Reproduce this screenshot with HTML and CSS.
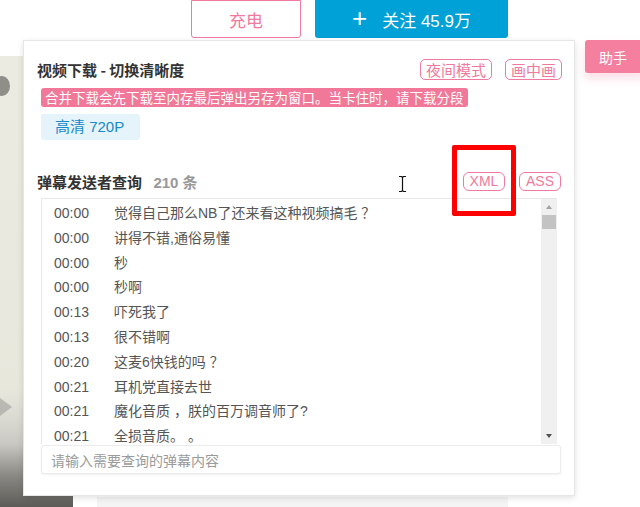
FILE: index.html
```html
<!DOCTYPE html>
<html lang="zh-CN">
<head>
    <meta charset="UTF-8">
    <meta name="viewport" content="width=device-width, initial-scale=1.0">
    <title>弹幕查询</title>
    <link rel="stylesheet" href="styles.css">
</head>
<body>
    <div class="page">
        <div class="video-bg">
            <div class="video-figure"></div>
            <div class="video-play"></div>
        </div>
        <div class="below-strip"></div>

        <div class="top-actions">
            <button class="btn-charge">充电</button>
            <button class="btn-follow"><span class="plus">+</span>关注 45.9万</button>
        </div>

        <button class="btn-helper">助手</button>

        <div class="panel">
            <div class="panel-row">
                <h3 class="panel-title">视频下载 - 切换清晰度</h3>
                <div class="tags">
                    <span class="tag">夜间模式</span>
                    <span class="tag">画中画</span>
                </div>
            </div>
            <div class="notice">合并下载会先下载至内存最后弹出另存为窗口。当卡住时，请下载分段</div>
            <div class="quality">高清 720P</div>

            <div class="panel-row section-row">
                <h3 class="panel-title">弹幕发送者查询 <span class="count">210 条</span></h3>
                <div class="tags tags-small">
                    <span class="tag tag-small">XML</span>
                    <span class="tag tag-small">ASS</span>
                </div>
            </div>

            <div class="danmaku-box">
                <ul class="danmaku-list">
                    <li><span class="time">00:00</span>觉得自己那么NB了还来看这种视频搞毛 ？</li>
                    <li><span class="time">00:00</span>讲得不错,通俗易懂</li>
                    <li><span class="time">00:00</span>秒</li>
                    <li><span class="time">00:00</span>秒啊</li>
                    <li><span class="time">00:13</span>吓死我了</li>
                    <li><span class="time">00:13</span>很不错啊</li>
                    <li><span class="time">00:20</span>这麦6快钱的吗 ？</li>
                    <li><span class="time">00:21</span>耳机党直接去世</li>
                    <li><span class="time">00:21</span>魔化音质 ，朕的百万调音师了?</li>
                    <li><span class="time">00:21</span>全损音质。 。</li>
                </ul>
                <div class="scrollbar">
                    <span class="arrow arrow-up"></span>
                    <span class="thumb"></span>
                    <span class="arrow arrow-down"></span>
                </div>
            </div>
            <input class="search" type="text" placeholder="请输入需要查询的弹幕内容">

            <svg class="ibeam" width="9" height="18" viewBox="0 0 9 18">
                <path d="M1 1.5h2.5l1 1 1-1H8M4.5 2.5v13M1 16.5h2.5l1-1 1 1H8" fill="none" stroke="#111" stroke-width="1.2"/>
            </svg>
            <div class="highlight"></div>
        </div>
    </div>
</body>
</html>
```

FILE: styles.css
```css
body {
    margin: 0;
    background-color: #ffffff;
    font-family: 'Liberation Sans', 'Noto Sans CJK SC', sans-serif;
    color: #333;
}

.page {
    position: relative;
    width: 640px;
    height: 507px;
    overflow: hidden;
}

/* video behind the popup */
.video-bg {
    position: absolute;
    left: 0;
    top: 56px;
    width: 73px;
    height: 451px;
    background: linear-gradient(to bottom, #ecebe2 0%, #e8e7dc 74%, #dcdbd3 80%, #c9c8c2 86%, #8a8984 93%, #5c5b57 100%);
}

.video-figure {
    position: absolute;
    left: -6px;
    top: 20px;
    width: 16px;
    height: 20px;
    border-radius: 50%;
    background-color: #8f8e88;
}

.video-play {
    position: absolute;
    left: 0;
    top: 342px;
    width: 0;
    height: 0;
    border-top: 9px solid transparent;
    border-bottom: 9px solid transparent;
    border-left: 12px solid #b9b8b2;
}

.below-strip {
    position: absolute;
    left: 97px;
    top: 497px;
    width: 411px;
    height: 10px;
    background-color: #f4f4f4;
}

.top-actions {
    display: flex;
    gap: 14px;
    padding-left: 191px;
}

.top-actions button {
    height: 38px;
    font-family: 'Liberation Sans', 'Noto Sans CJK SC', sans-serif;
    font-size: 17px;
    border-radius: 0 0 3px 3px;
    cursor: pointer;
}

.btn-charge {
    width: 110px;
    background-color: #fff;
    border: 1px solid #f07a9d;
    color: #f07a9d;
}

.btn-follow {
    width: 193px;
    background-color: #00a1d6;
    border: none;
    color: #fff;
    display: flex;
    align-items: center;
    justify-content: center;
}

.btn-follow .plus {
    font-size: 26px;
    font-weight: 300;
    margin-right: 15px;
    line-height: 1;
    margin-top: -2px;
}

.btn-helper {
    position: absolute;
    left: 585px;
    top: 40px;
    width: 60px;
    height: 33px;
    padding-left: 14px;
    text-align: left;
    background-color: #f57f9f;
    border: none;
    border-radius: 3px;
    color: #fff;
    font-family: 'Noto Sans CJK SC', sans-serif;
    font-size: 14px;
    box-shadow: 0 6px 10px rgba(245, 127, 159, 0.25);
}

/* popup */
.panel {
    position: absolute;
    left: 23px;
    top: 40px;
    width: 525px;
    height: 436px;
    padding: 18px 12px 0 13px;
    background-color: #fff;
    border: 1px solid #e6e6e6;
    box-shadow: 0 2px 6px rgba(0, 0, 0, 0.12);
    display: flex;
    flex-direction: column;
}

.panel-row {
    display: flex;
    align-items: center;
    justify-content: space-between;
    height: 21px;
}

.panel-title {
    margin: 0;
    font-family: 'Noto Sans CJK SC', sans-serif;
    font-size: 15px;
    font-weight: bold;
    color: #333;
    line-height: 21px;
}

.count {
    margin-left: 8px;
    color: #999;
    font-family: 'Liberation Sans', 'Noto Sans CJK SC', sans-serif;
}

.tags {
    display: flex;
    gap: 13px;
}

.tags-small {
    gap: 14px;
    margin-right: 1px;
}

.tag {
    display: inline-block;
    height: 19px;
    line-height: 19px;
    padding: 0 5px;
    border: 1px solid #f07a9d;
    border-radius: 5px;
    color: #f07a9d;
    font-family: 'Noto Sans CJK SC', sans-serif;
    font-size: 15px;
}

.tag-small {
    height: 17px;
    line-height: 17px;
    width: 30px;
    text-align: center;
    font-family: 'Liberation Sans', sans-serif;
    font-size: 14px;
    border-radius: 6px;
}

.notice {
    align-self: flex-start;
    margin: 8px 0 0 4px;
    height: 19px;
    line-height: 19px;
    padding: 0 4px;
    background-color: #f2789a;
    border-radius: 3px;
    color: #fff;
    font-family: 'Noto Sans CJK SC', sans-serif;
    font-size: 13.5px;
    white-space: nowrap;
}

.quality {
    align-self: flex-start;
    margin: 7px 0 0 4px;
    width: 99px;
    height: 26px;
    line-height: 26px;
    padding-left: 14px;
    box-sizing: border-box;
    background-color: #e5f3fb;
    border-radius: 3px;
    color: #1789c9;
    font-size: 15px;
}

.section-row {
    margin-top: 31px;
    height: 21px;
}

.danmaku-box {
    display: flex;
    margin: 6px 0 0 4px;
    width: 516px;
    height: 246px;
    box-sizing: border-box;
    border: 1px solid #e8e8e8;
    border-right: none;
    border-bottom: none;
}

.danmaku-list {
    flex: 1;
    margin: 0;
    padding: 2px 0 0 12px;
    list-style: none;
    overflow: hidden;
}

.danmaku-list li {
    height: 24.8px;
    line-height: 24.8px;
    font-size: 14px;
    color: #555;
    white-space: nowrap;
}

.danmaku-list .time {
    display: inline-block;
    width: 60px;
}

.scrollbar {
    position: relative;
    width: 16px;
    background-color: #f0f0f0;
}

.scrollbar .thumb {
    position: absolute;
    left: 1px;
    top: 16px;
    width: 14px;
    height: 14px;
    background-color: #c3c3c3;
}

.scrollbar .arrow {
    position: absolute;
    left: 5px;
    width: 0;
    height: 0;
    border-left: 3.5px solid transparent;
    border-right: 3.5px solid transparent;
}

.arrow-up {
    top: 6px;
    border-bottom: 4px solid #a3a3a3;
}

.arrow-down {
    bottom: 6px;
    border-top: 4px solid #505050;
}

.search {
    margin: 1px 0 0 4px;
    width: 520px;
    height: 29px;
    box-sizing: border-box;
    padding: 0 9px;
    border: 1px solid #ececec;
    border-radius: 3px;
    box-shadow: 0 1px 2px rgba(0, 0, 0, 0.06);
    font-family: 'Noto Sans CJK SC', sans-serif;
    font-size: 14px;
    outline: none;
}

.search::placeholder {
    color: #9a9a9a;
}

.ibeam {
    position: absolute;
    left: 374px;
    top: 134px;
}

/* red annotation box drawn over the screenshot */
.highlight {
    position: absolute;
    left: 428px;
    top: 104px;
    width: 54px;
    height: 61px;
    border: 5px solid #ff0000;
    border-radius: 2px;
}
```
